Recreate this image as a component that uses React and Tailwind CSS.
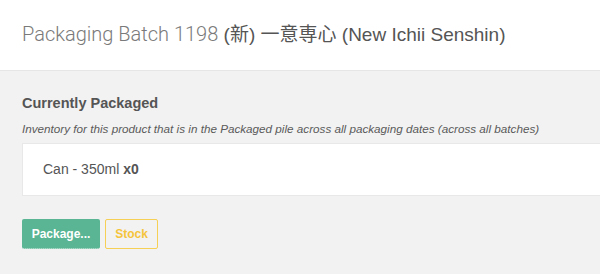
import React from 'react';

const App = () => {
  return (
    <div className="min-h-screen bg-[#f2f2f2] font-['Liberation_Sans','Noto_Sans_CJK_TC',sans-serif] text-[#555]">
      <div className="bg-white border-b border-[#e6e6e6] h-[71px] px-[22px] pt-[22px]">
        <h1 className="text-[19px] leading-[24px] text-[#555] whitespace-nowrap">
          <span className="font-['Roboto','Liberation_Sans',sans-serif] font-light text-[20px] text-[#7a7a7a]">Packaging Batch 1198</span>{' '}
          <span>(新) 一意専心 (New Ichii Senshin)</span>
        </h1>
      </div>

      <div className="px-[22px] pt-[23px]">
        <h2 className="text-[14.5px] leading-[18px] font-bold text-[#555]">Currently Packaged</h2>
        <p className="mt-[10px] text-[11.7px] leading-[14px] italic text-[#5a5a5a] whitespace-nowrap">
          Inventory for this product that is in the Packaged pile across all packaging dates (across all batches)
        </p>

        <div className="mt-[7px] -mr-[30px] bg-white border border-[#e8e8e8] h-[53px] px-[20px] flex items-center">
          <span className="text-[14px] text-[#555]">
            Can - 350ml <b>x0</b>
          </span>
        </div>

        <div className="mt-[23px] flex gap-[5px]">
          <button className="h-[30px] w-[78px] rounded-[2px] bg-[#59b593] text-white text-[12px] font-bold border-b border-dotted border-[#cfe9de]">
            Package...
          </button>
          <button className="h-[30px] w-[53px] rounded-[2px] border border-[#f6cf55] text-[#f5c43c] text-[12px] font-bold">
            Stock
          </button>
        </div>
      </div>
    </div>
  );
};

export default App;
